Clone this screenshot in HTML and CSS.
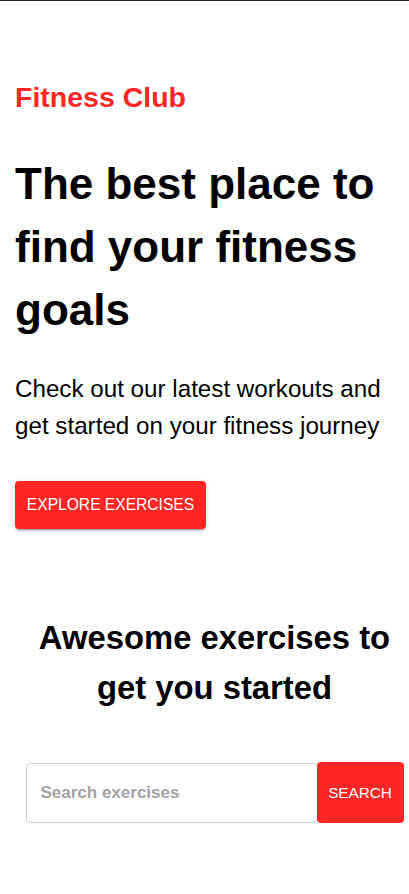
FILE: index.html
```html
<!DOCTYPE html>
<html lang="en">
<head>
<meta charset="utf-8">
<title>Fitness Club</title>
<link rel="stylesheet" href="styles.css">
</head>
<body>
<div class="topbar"></div>
<section class="hero">
  <p class="brand">Fitness Club</p>
  <h1 class="title">The best place to find your fitness goals</h1>
  <p class="lead">Check out our latest workouts and get started on your fitness journey</p>
  <button class="btn btn-explore" type="button">Explore Exercises</button>
</section>
<section class="search-section">
  <h2 class="search-title">Awesome exercises to get you started</h2>
  <div class="search-row">
    <input class="search-input" type="text" placeholder="Search exercises">
    <button class="btn btn-search" type="button">Search</button>
  </div>
</section>
</body>
</html>
```
FILE: styles.css
```css
* { box-sizing: border-box; }
html, body { margin: 0; padding: 0; background: #fff; }
body {
  font-family: "Liberation Sans", Arial, sans-serif;
  color: #000;
}
.topbar {
  height: 1px;
  background: #222;
}
.hero {
  padding: 76px 15px 0 15px;
}
.brand {
  margin: 0;
  color: #ff2625;
  font-weight: 700;
  font-size: 28.5px;
  line-height: 40px;
}
.title {
  margin: 35px 0 0 0;
  font-weight: 700;
  font-size: 44px;
  line-height: 63px;
}
.lead {
  margin: 29px 0 0 0;
  font-size: 24.2px;
  line-height: 37px;
}
.btn {
  font-family: "Liberation Sans", Arial, sans-serif;
  border: none;
  background: #ff2625;
  color: #fff;
  text-transform: uppercase;
  cursor: pointer;
  border-radius: 4px;
  white-space: nowrap;
}
.btn-explore {
  display: block;
  margin-top: 37px;
  height: 48px;
  width: 191px;
  padding: 0;
  font-size: 15.6px;
  box-shadow: 0 3px 1px -2px rgba(0,0,0,0.2), 0 2px 2px 0 rgba(0,0,0,0.14), 0 1px 5px 0 rgba(0,0,0,0.12);
}
.search-section {
  padding: 84px 0 0 20px;
}
.search-title {
  margin: 0;
  text-align: center;
  font-weight: 700;
  font-size: 32.8px;
  line-height: 50px;
}
.search-row {
  margin-top: 50px;
  display: flex;
  justify-content: center;
}
.search-input {
  width: 292px;
  height: 60px;
  border: 1px solid #cfcfcf;
  border-radius: 4px;
  padding: 0 14px;
  font-family: "Liberation Sans", Arial, sans-serif;
  font-size: 17px;
  font-weight: 700;
  outline: none;
  margin-right: -1px;
}
.search-input::placeholder {
  color: #a3a3a3;
  opacity: 1;
}
.btn-search {
  width: 87px;
  height: 61px;
  margin-top: -1px;
  padding: 0;
  font-size: 15.3px;
}
```
